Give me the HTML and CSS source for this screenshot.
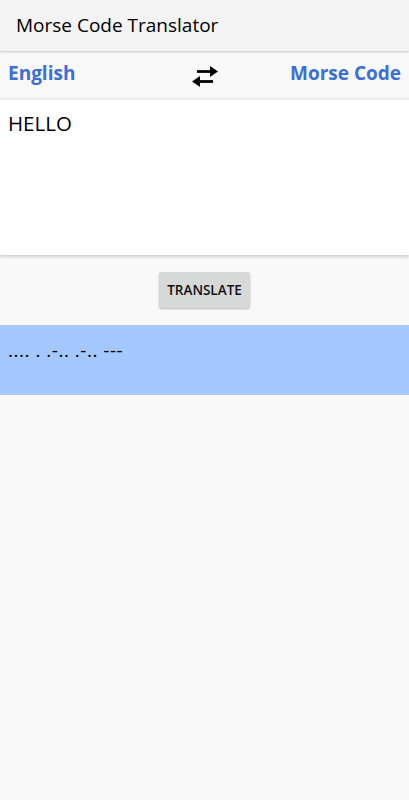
FILE: index.html
```html
<!DOCTYPE html>
<html>
<head>
<meta charset="utf-8">
<link rel="stylesheet" href="styles.css">
</head>
<body>
<header class="appbar">Morse Code Translator</header>
<div class="langs">
  <span class="lang">English</span>
  <svg class="swap" width="30" height="24" viewBox="0 0 30 24">
    <path d="M7 6.5H21" stroke="#000" stroke-width="2.8" fill="none"/>
    <path d="M20 1L28 6.5L20 12Z" fill="#000"/>
    <path d="M23 16.5H9" stroke="#000" stroke-width="2.8" fill="none"/>
    <path d="M10 11L2 16.5L10 22Z" fill="#000"/>
  </svg>
  <span class="lang right">Morse Code</span>
</div>
<div class="input">HELLO</div>
<div class="actions"><button class="btn">TRANSLATE</button></div>
<div class="output">.... . .-.. .-.. ---</div>
</body>
</html>
```
FILE: styles.css
```css
html, body {
  margin: 0;
  padding: 0;
  background: #f9f9f9;
  font-family: "Open Sans", "Noto Sans", sans-serif;
  color: #000;
}
.appbar {
  height: 51px;
  box-sizing: border-box;
  padding: 12px 16px 0;
  font-size: 19px;
  background: #f3f3f3;
  box-shadow: 0 1px 2px rgba(0,0,0,0.2);
  position: relative;
  z-index: 2;
}
.langs {
  height: 48px;
  margin-top: 1px;
  display: grid;
  grid-template-columns: 1fr auto 1fr;
  align-items: center;
  padding: 0 8px;
  background: #f8f8f8;
  border-bottom: 2px solid #ececec;
  box-sizing: border-box;
}
.lang {
  color: #3b6fd6;
  font-weight: 700;
  font-size: 19px;
  margin-top: -4px;
}
.lang.right {
  text-align: right;
}
.swap {
  margin-top: 4px;
}
.input {
  height: 155px;
  box-sizing: border-box;
  background: #fff;
  padding: 9px 8px;
  font-size: 20.5px;
  box-shadow: 0 2px 3px rgba(0,0,0,0.18);
}
.actions {
  display: flex;
  justify-content: center;
  padding: 17px 0 17px;
}
.btn {
  width: 91px;
  height: 36px;
  border: none;
  border-radius: 2px;
  background: #d7d8d8;
  font-family: inherit;
  font-size: 13.5px;
  font-weight: 600;
  color: #111;
  box-shadow: 0 1px 2px rgba(0,0,0,0.25);
  padding: 0;
}
.output {
  height: 70px;
  box-sizing: border-box;
  background: #a4c7fd;
  padding: 12px 8px;
  font-size: 19px;
  letter-spacing: 0.5px;
  box-shadow: 0 2px 3px rgba(0,0,0,0.2);
}
```
